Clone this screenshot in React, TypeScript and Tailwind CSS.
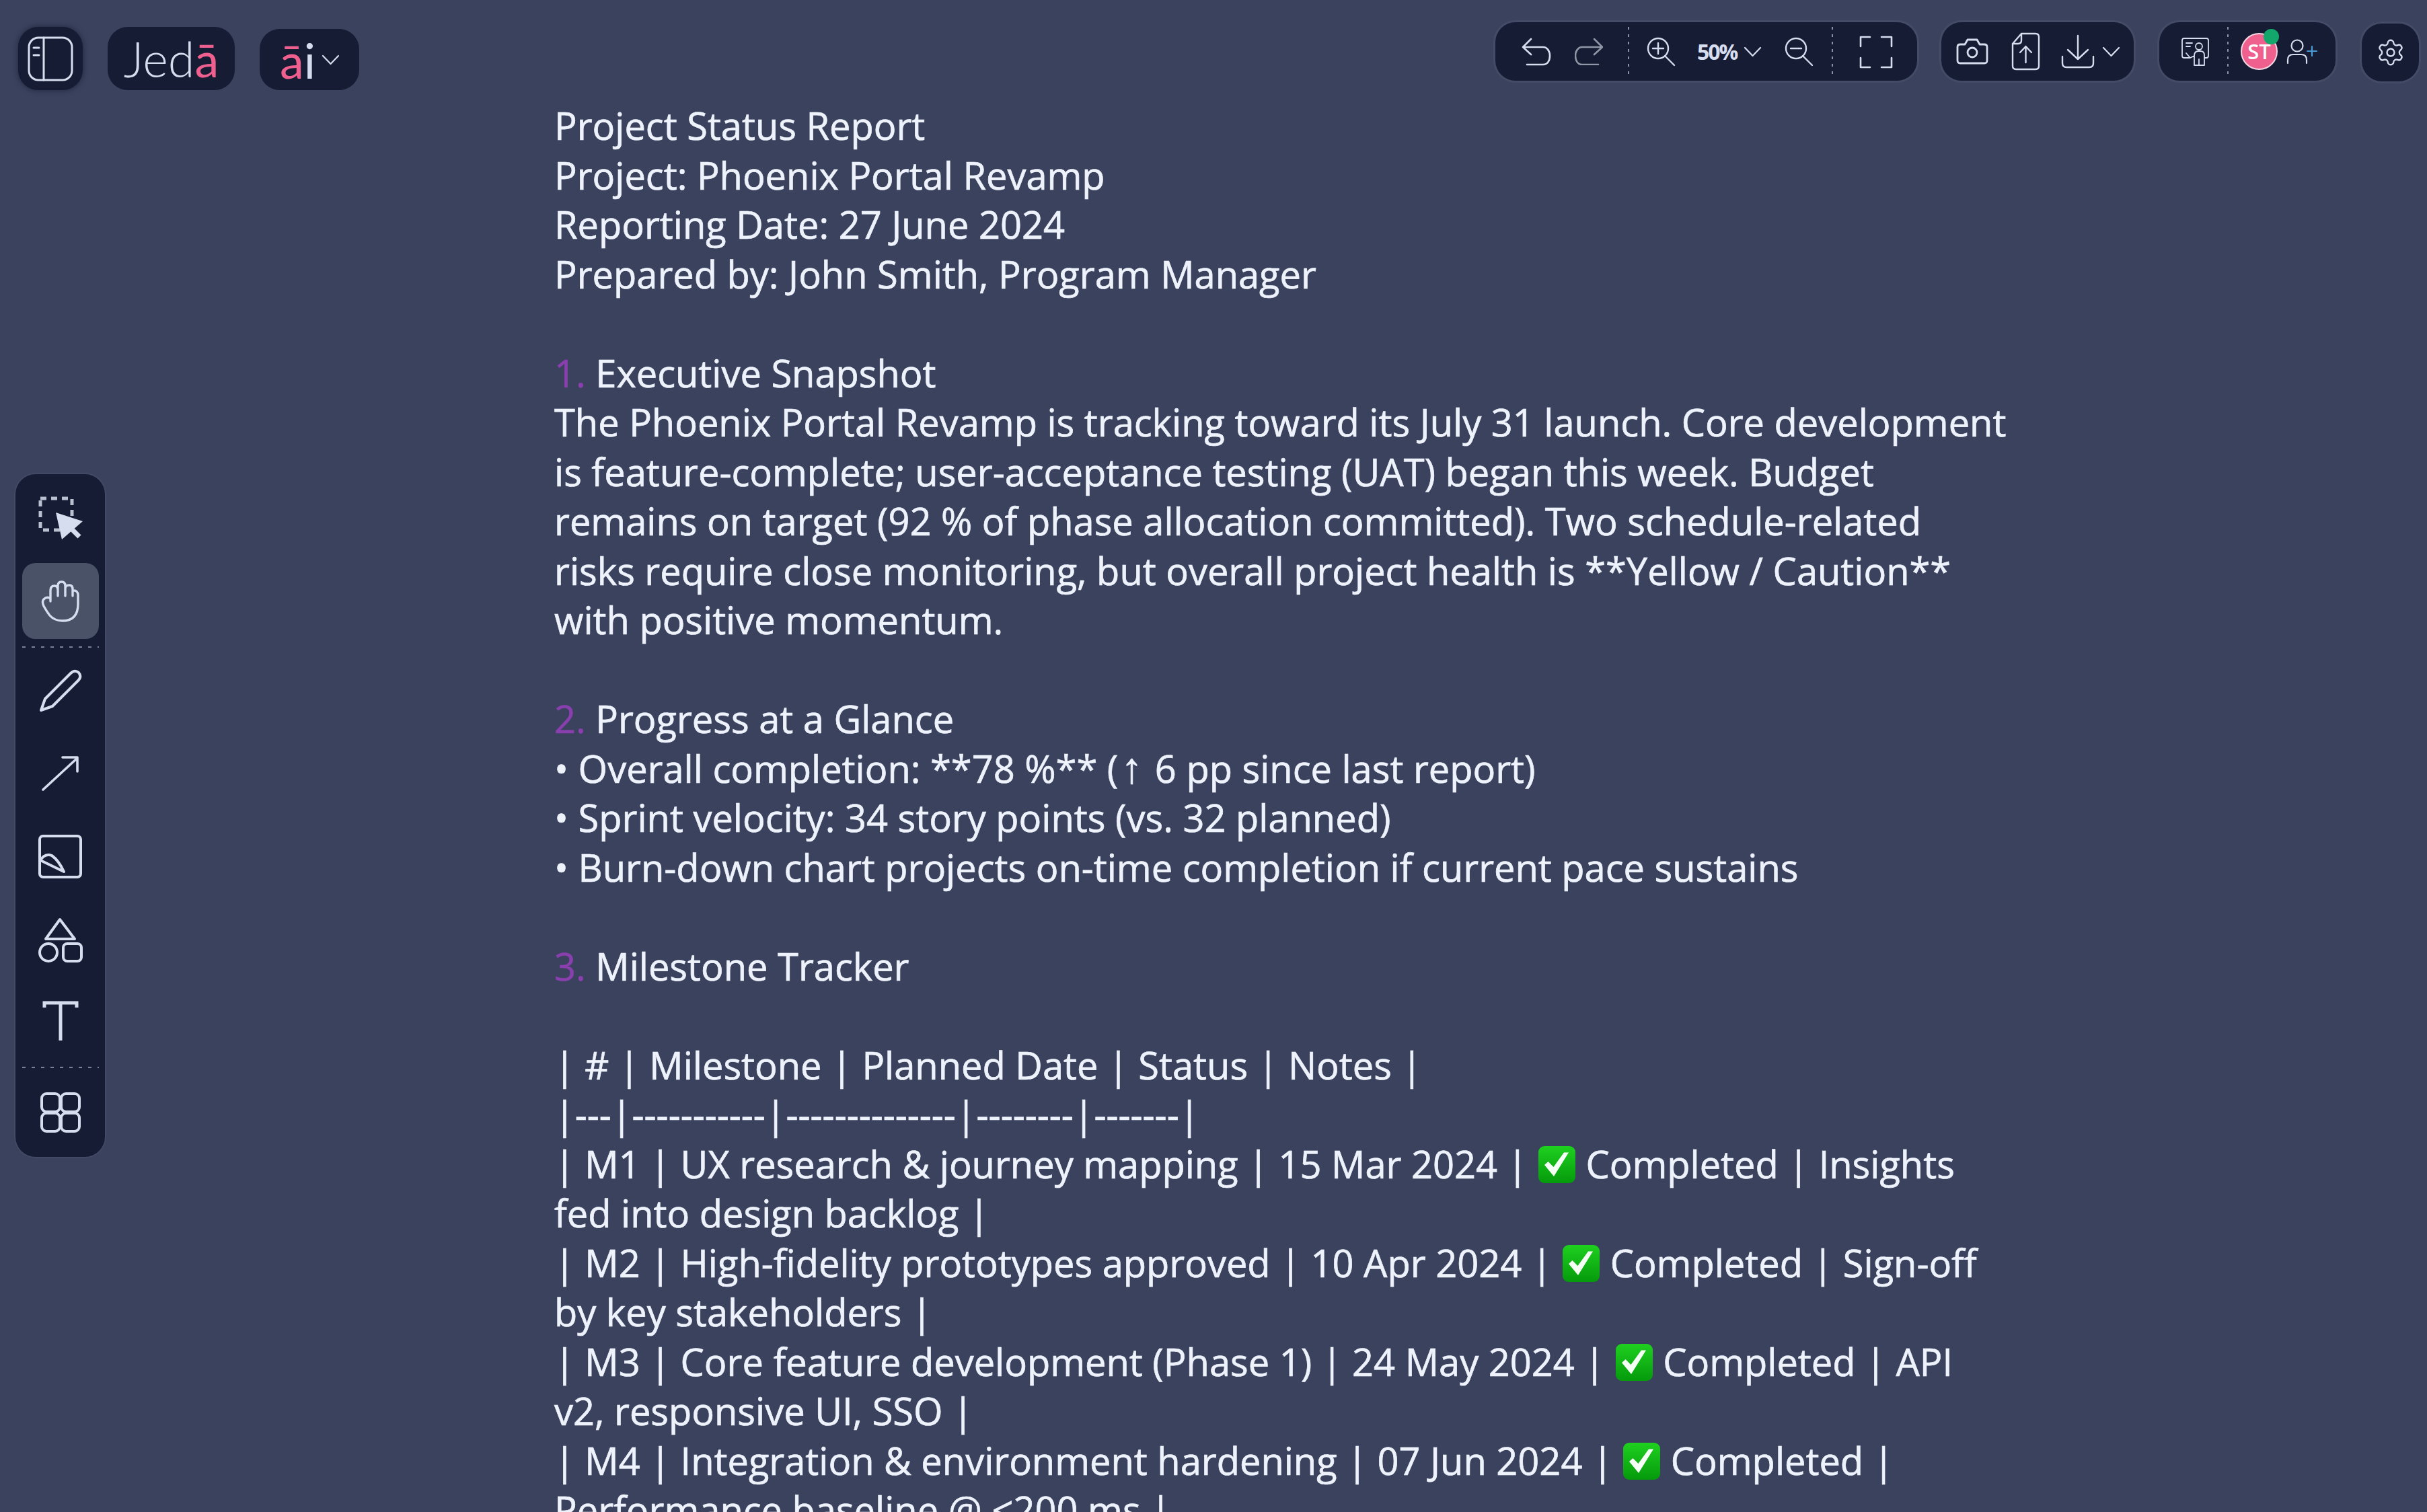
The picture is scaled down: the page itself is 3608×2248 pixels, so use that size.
import React from "react";
import { Settings } from "lucide-react";

const STROKE = "#d6ddee";

function Ico({ w, h, sw = 3, className = "", children }: { w: number; h: number; sw?: number; className?: string; children: React.ReactNode }) {
  return (
    <svg width={w} height={h} viewBox={`0 0 ${w} ${h}`} fill="none" stroke={STROKE} strokeWidth={sw} strokeLinecap="round" strokeLinejoin="round" className={`block shrink-0 overflow-visible ${className}`}>
      {children}
    </svg>
  );
}

const Chevron = ({ className = "" }: { className?: string }) => (
  <Ico w={25} h={14} sw={2.2} className={className}>
    <path d="M1 1 L12.5 13 L24 1" />
  </Ico>
);

const VDash = ({ className = "" }: { className?: string }) => (
  <div className={`w-[2px] h-[73px] shrink-0 bg-[repeating-linear-gradient(180deg,#8a92a8_0_4px,transparent_4px_11px)] ${className}`} />
);

const HDash = ({ className = "" }: { className?: string }) => (
  <div className={`w-[114px] h-[2px] shrink-0 bg-[repeating-linear-gradient(90deg,#7a8299_0_5px,transparent_5px_14px)] ${className}`} />
);

const Check = () => (
  <svg width="57" height="57" viewBox="0 0 57 57" className="inline-block align-[-8px]">
    <defs>
      <linearGradient id="chk" x1="0" y1="0" x2="0" y2="1">
        <stop offset="0" stopColor="#1fd01f" />
        <stop offset="1" stopColor="#059a0c" />
      </linearGradient>
    </defs>
    <rect x="1" y="1" width="55" height="55" rx="9" fill="url(#chk)" />
    <path d="M10 29 L15.5 24 L23.5 32 L39 10.5 L46 10.5 L24 46 Z" fill="#f6fff6" />
  </svg>
);

const Num = ({ n }: { n: string }) => <span className="text-[#8a3fae] [-webkit-text-stroke:0.6px_#8a3fae]">{n}</span>;

function App() {
  return (
    <div className="relative w-[3608px] h-[2248px] overflow-hidden bg-[#3a425e] font-['Open_Sans',sans-serif]">
      {/* document text */}
      <div className="pl-[824px] pt-[150px]">
        <div className="w-[2165px] whitespace-pre-wrap text-[56px] leading-[73.5px] text-[#eef2fb] [-webkit-text-stroke:0.7px_#eef2fb]">
          {`Project Status Report
Project: Phoenix Portal Revamp
Reporting Date: 27 June 2024
Prepared by: John Smith, Program Manager

`}
          <Num n="1." />
          {` Executive Snapshot
The Phoenix Portal Revamp is tracking toward its July 31 launch. Core development is feature-complete; user-acceptance testing (UAT) began this week. Budget remains on target (92 % of phase allocation committed). Two schedule-related risks require close monitoring, but overall project health is **Yellow / Caution** with positive momentum.

`}
          <Num n="2." />
          {` Progress at a Glance
• Overall completion: **78 %** (`}
          <span className="inline-block w-[40px] text-center font-['Liberation_Sans',sans-serif] text-[64px] leading-none">↑</span>
          {` 6 pp since last report)
• Sprint velocity: 34 story points (vs. 32 planned)
• Burn-down chart projects on-time completion if current pace sustains

`}
          <Num n="3." />
          {` Milestone Tracker

| # | Milestone | Planned Date | Status | Notes |
|---|-----------|--------------|--------|-------|
| M1 | UX research & journey mapping | 15 Mar 2024 | `}
          <Check />
          {` Completed | Insights fed into design backlog |
| M2 | High-fidelity prototypes approved | 10 Apr 2024 | `}
          <Check />
          {` Completed | Sign-off by key stakeholders |
| M3 | Core feature development (Phase 1) | 24 May 2024 | `}
          <Check />
          {` Completed | API v2, responsive UI, SSO |
| M4 | Integration & environment hardening | 07 Jun 2024 | `}
          <Check />
          {` Completed | Performance baseline @ <200 ms |`}
        </div>
      </div>

      {/* top bar */}
      <div className="absolute inset-x-0 top-0 flex justify-between pl-[27px] pr-[12px] text-[#d6ddee]">
        <div className="flex items-start gap-[37px] pt-[40px]">
          <div className="flex h-[94px] w-[96px] items-center justify-center rounded-[30px] bg-[#161c33] shadow-[0_0_8px_rgba(10,14,30,0.55)]">
            <Ico w={66} h={65} sw={3}>
              <rect x="1" y="1" width="64" height="63" rx="14" />
              <path d="M23 1 V64 M8 16 H16 M8 27 H16" />
            </Ico>
          </div>
          <div className="flex h-[94px] w-[189px] items-center justify-center rounded-[30px] bg-[#161c33] font-['Lato',sans-serif] text-[72px] font-light leading-none">
            <span>Jed</span>
            <span className="font-normal text-[#f0608f]">ā</span>
          </div>
          <div className="mt-[3px] flex h-[91px] w-[148px] items-center justify-center rounded-[30px] bg-[#161c33] font-['Lato',sans-serif] text-[72px] font-normal leading-none">
            <span className="text-[#f0608f]">ā</span>
            <span>i</span>
            <Chevron className="ml-[10px]" />
          </div>
        </div>

        <div className="flex items-start pt-[33px]">
          {/* undo / zoom */}
          <div className="flex h-[87px] w-[627px] items-center rounded-[30px] bg-[#161c33] pl-[40px] shadow-[0_0_0_3px_rgba(255,255,255,0.05)]">
            <Ico w={42} h={40} sw={2.6}>
              <path d="M13 1 L1 13 L13 24 M1 13 H31 C37 13 41 19 41 26 C41 34 37 39 31 39 H7" />
            </Ico>
            <svg width="42" height="40" viewBox="0 0 42 40" fill="none" stroke="#8f96a6" strokeWidth="2.6" strokeLinecap="round" strokeLinejoin="round" className="ml-[36px] block shrink-0">
              <path d="M29 1 L41 13 L29 24 M41 13 H11 C5 13 1 19 1 26 C1 34 5 39 11 39 H35" />
            </svg>
            <VDash className="ml-[37px]" />
            <Ico w={41} h={41} sw={2.4} className="ml-[27px]">
              <circle cx="16" cy="16" r="15" />
              <path d="M26 27 L40 41 M8 16 H24 M16 8 V24" />
            </Ico>
            <span className="ml-[33px] w-[58px] text-[32px] font-bold tracking-[-2px]">50%</span>
            <Chevron className="ml-[12px]" />
            <Ico w={41} h={41} sw={2.4} className="ml-[36px]">
              <circle cx="16" cy="16" r="15" />
              <path d="M26 27 L40 41 M8 16 H24" />
            </Ico>
            <VDash className="ml-[28px]" />
            <Ico w={47} h={46} sw={2.6} className="ml-[40px]">
              <path d="M1 15 V1 H15 M32 1 H47 V15 M1 32 V46 H15 M32 46 H47 V32" />
            </Ico>
          </div>

          {/* export */}
          <div className="ml-[36px] flex h-[87px] w-[286px] items-center rounded-[30px] bg-[#161c33] pl-[23px] shadow-[0_0_0_3px_rgba(255,255,255,0.05)]">
            <Ico w={46} h={37} sw={2.8}>
              <path d="M5 8 H12 L16 1 H30 L34 8 H41 Q45 8 45 12 V32 Q45 36 41 36 H5 Q1 36 1 32 V12 Q1 8 5 8 Z" />
              <circle cx="23" cy="20" r="7" />
            </Ico>
            <Ico w={41} h={55} sw={2.4} className="ml-[36px]">
              <path d="M14 1 H35 Q40 1 40 6 V49 Q40 54 35 54 H6 Q1 54 1 49 V16 Z M14 1 V11 Q14 16 9 16 H1" />
              <path d="M20.5 44 V20 M12 29 L20.5 20 L29 29" />
            </Ico>
            <Ico w={48} h={50} sw={2.4} className="ml-[33px]">
              <path d="M24 1 V36 M9 22 L24 36 L39 22 M1 32 V42 Q1 48 7 48 H41 Q47 48 47 42 V32" />
            </Ico>
            <Chevron className="ml-[13px]" />
          </div>

          {/* presentation / users */}
          <div className="ml-[38px] flex h-[87px] w-[262px] items-center rounded-[30px] bg-[#161c33] pl-[33px] shadow-[0_0_0_3px_rgba(255,255,255,0.05)]">
            <Ico w={41} h={42} sw={1.8}>
              <path d="M12 30 H4 Q1 30 1 27 V4 Q1 1 4 1 H37 Q40 1 40 4 V27 Q40 30 37 30 H34" />
              <path d="M7 8 H16 M7 13 H13" />
              <circle cx="26" cy="13" r="5" />
              <path d="M19 41 V27 L13 30 L7 23 M19 27 Q19 20 25 20 H28 Q34 20 34 26 V41 H19 M26 32 V41" />
            </Ico>
            <VDash className="ml-[27px]" />
            <div className="relative ml-[18px] flex h-[55px] w-[55px] shrink-0 items-center justify-center rounded-full border-2 border-[#f3d7e2] bg-[#f0608f] text-[31px] font-semibold text-white">
              ST
              <div className="absolute -right-[4px] -top-[8px] h-[23px] w-[23px] rounded-full bg-[#14a76c]" />
            </div>
            <Ico w={46} h={37} sw={2.2} className="ml-[14px]">
              <circle cx="15" cy="10" r="8.5" />
              <path d="M1 36 V31 Q1 23 9 23 H21 Q29 23 29 31 V36" />
              <path d="M37 11 V25 M30 18 H44" stroke="#4a9ad6" />
            </Ico>
          </div>

          {/* settings */}
          <div className="ml-[39px] mt-[2px] flex h-[86px] w-[85px] items-center justify-center rounded-[30px] bg-[#161c33] shadow-[0_0_0_3px_rgba(255,255,255,0.05)]">
            <Settings size={44} strokeWidth={1.3} color={STROKE} />
          </div>
        </div>
      </div>

      {/* left toolbar */}
      <div className="absolute left-[23px] top-[705px] flex w-[133px] flex-col items-center rounded-[30px] bg-[#161c33] pt-[33px] pb-[36px] shadow-[0_0_0_2px_rgba(255,255,255,0.04)]">
        <Ico w={66} h={64} sw={5} className="ml-[1px]">
          <rect x="3" y="3" width="47" height="47" stroke="#b9c0d0" strokeDasharray="9 7" strokeLinecap="butt" />
          <path d="M26 24 L66 37 L35 64 Z" fill={STROKE} stroke="none" />
          <path d="M50 49 L61 60" strokeWidth="7" strokeLinecap="butt" />
        </Ico>
        <div className="mt-[35px] flex h-[113px] w-[114px] items-center justify-center rounded-[20px] bg-[#4a5268]">
          <Ico w={55} h={60} sw={3.4}>
            <path d="M13 30 V14 Q13 7 19 7 Q24 7 24 13 V22 M24 12 V7 Q24 1 29.5 1 Q35 1 35 7 V22 M35 11 Q35 6 41 6 Q46 6 46 12 V22 M46 14 Q53 13 54 20 V34 Q54 59 31 59 Q19 59 12 51 Q8 46 3 37 Q0 30 3 27 Q8 22 13 26" />
          </Ico>
        </div>
        <HDash className="mt-[11px]" />
        <Ico w={62} h={63} sw={4} className="mt-[32px]">
          <path d="M2 61 L8 44 L46 6 Q52 0 58 5 Q63 11 57 17 L19 55 Z" />
        </Ico>
        <Ico w={53} h={53} sw={3.6} className="mt-[66px]">
          <path d="M1 50 L52 3 M30 2 H52 V23" />
        </Ico>
        <Ico w={65} h={65} sw={4} className="mt-[64px]">
          <rect x="2" y="2" width="61" height="61" rx="5" />
          <path d="M3 38 Q10 27 20 31 Q30 38 38 55 Z" />
        </Ico>
        <Ico w={66} h={66} sw={4} className="mt-[59px]">
          <path d="M32 2 L11 31 H54 Z" />
          <circle cx="15" cy="51" r="13" />
          <rect x="37" y="38" width="27" height="26" rx="6" />
        </Ico>
        <Ico w={52} h={58} sw={5} className="mt-[58px]">
          <path d="M2 9 V2 H50 V9 M26 2 V58" strokeLinecap="butt" strokeLinejoin="miter" />
        </Ico>
        <HDash className="mt-[39px]" />
        <Ico w={60} h={60} sw={4} className="mt-[36px]">
          <rect x="2" y="2" width="27" height="27" rx="7" />
          <rect x="31" y="2" width="27" height="27" rx="7" />
          <rect x="2" y="31" width="27" height="27" rx="7" />
          <rect x="31" y="31" width="27" height="27" rx="7" />
        </Ico>
      </div>
    </div>
  );
}

export default App;
